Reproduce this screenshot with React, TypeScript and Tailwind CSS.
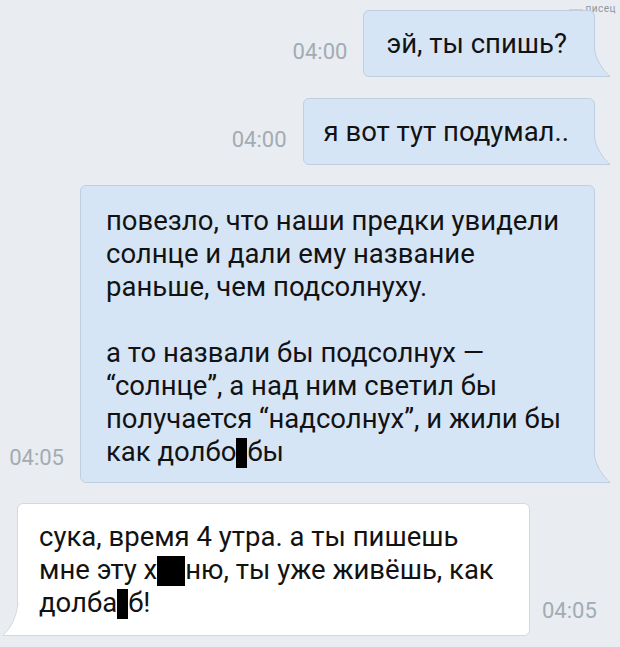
import React from "react";

const OUT_BG = "#d6e5f6";
const OUT_BORDER = "#bfcfe0";
const IN_BG = "#ffffff";
const IN_BORDER = "#d3d9df";

function OutTail() {
  return (
    <svg
      className="absolute right-[-17px] bottom-[-1px]"
      width="18"
      height="29"
      viewBox="0 0 18 29"
    >
      <path d="M0,0 L1,0 Q4,17 17,28.5 L0,28.5 Z" fill={OUT_BG} />
      <path d="M1,0 Q4,17 17,28.5 L0,28.5" fill="none" stroke={OUT_BORDER} strokeWidth="1" />
    </svg>
  );
}

function InTail() {
  return (
    <svg
      className="absolute left-[-16px] bottom-[-1px]"
      width="17"
      height="33"
      viewBox="0 0 17 33"
    >
      <path d="M17,0 L16,0 Q14,20 1,32.5 L17,32.5 Z" fill={IN_BG} />
      <path d="M16,0 Q14,20 1,32.5 L17,32.5" fill="none" stroke={IN_BORDER} strokeWidth="1" />
    </svg>
  );
}

function Time({ t }: { t: string }) {
  return (
    <div className="text-[22px] leading-[24px] text-[#a3abb3] mb-[13px] whitespace-nowrap">
      {t}
    </div>
  );
}

function Block({ w }: { w: number }) {
  return (
    <span
      className="inline-block bg-black h-[30px] align-[-7px]"
      style={{ width: w }}
    />
  );
}

export default function App() {
  return (
    <div
      className="relative w-[620px] h-[647px] bg-[#e9edf1] overflow-hidden text-[#121212]"
      style={{ fontFamily: "Roboto, 'Noto Sans', sans-serif" }}
    >
      <div className="absolute top-[3px] right-[4px] flex items-center gap-[2px]">
        <div className="w-[14px] h-px bg-[#c9d0d6]" />
        <span className="text-[10px] leading-[12px] text-[#8e979f] tracking-[0.5px]">
          писец
        </span>
      </div>

      <div className="flex flex-col pt-[10px] gap-[20px]">
        {/* 1 */}
        <div className="flex justify-end items-end gap-[16px] pr-[25px]">
          <Time t="04:00" />
          <div
            className="relative rounded-[6px] rounded-br-none border pl-[22px] pr-[27px] py-[16px] text-[27.5px] leading-[33px]"
            style={{ background: OUT_BG, borderColor: OUT_BORDER }}
          >
            эй, ты спишь?
            <OutTail />
          </div>
        </div>

        {/* 2 */}
        <div className="flex justify-end items-end gap-[16px] pr-[25px] mt-[1px]">
          <Time t="04:00" />
          <div
            className="relative rounded-[6px] rounded-br-none border pl-[20px] pr-[25px] py-[16px] text-[27.5px] leading-[33px]"
            style={{ background: OUT_BG, borderColor: OUT_BORDER }}
          >
            я вот тут подумал..
            <OutTail />
          </div>
        </div>

        {/* 3 */}
        <div className="flex justify-end items-end gap-[16px] pr-[25px]">
          <Time t="04:05" />
          <div
            className="relative w-[515px] rounded-[6px] rounded-br-none border pl-[25px] pr-[20px] pt-[18px] pb-[14px] text-[27.5px] leading-[33px]"
            style={{ background: OUT_BG, borderColor: OUT_BORDER }}
          >
            <div>повезло, что наши предки увидели</div>
            <div>солнце и дали ему название</div>
            <div>раньше, чем подсолнуху.</div>
            <div>&nbsp;</div>
            <div>а то назвали бы подсолнух —</div>
            <div>“солнце”, а над ним светил бы</div>
            <div>получается “надсолнух”, и жили бы</div>
            <div>
              как долбо<Block w={11} />бы
            </div>
            <OutTail />
          </div>
        </div>

        {/* 4 */}
        <div className="flex justify-start items-end gap-[12px] pl-[17px]">
          <div
            className="relative w-[513px] rounded-[6px] rounded-bl-none border pl-[21px] pr-[16px] py-[16px] text-[27.5px] leading-[33px]"
            style={{ background: IN_BG, borderColor: IN_BORDER }}
          >
            <div>сука, время 4 утра. а ты пишешь</div>
            <div>
              мне эту х<Block w={28} />ню, ты уже живёшь, как
            </div>
            <div>
              долба<Block w={11} />б!
            </div>
            <InTail />
          </div>
          <Time t="04:05" />
        </div>
      </div>
    </div>
  );
}
